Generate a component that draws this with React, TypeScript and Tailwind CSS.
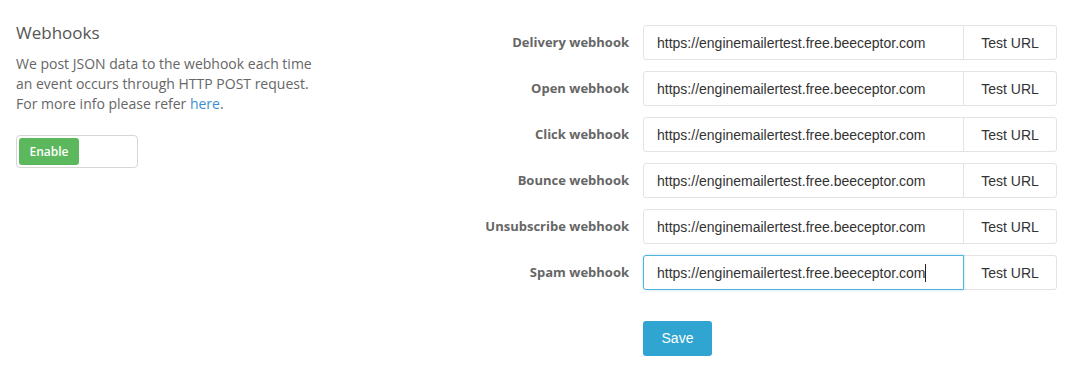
const hooks = ['Delivery', 'Open', 'Click', 'Bounce', 'Unsubscribe', 'Spam']
const url = 'https://enginemailertest.free.beeceptor.com'

function Row({ name, focused }: { name: string; focused?: boolean }) {
  return (
    <div className="flex items-center h-[35px]">
      <label className="w-[159px] text-right text-[13px] font-bold text-[#666] font-['Open_Sans',sans-serif]">
        {name} webhook
      </label>
      <div className="ml-[14px] flex h-[35px]">
        <div
          className={
            focused
              ? 'w-[321px] h-full flex items-center pl-[13px] pt-px border border-[#4fb3dd] rounded-l-[3px] shadow-[0_0_3px_rgba(79,179,221,0.4)] relative z-10'
              : 'w-[321px] h-full flex items-center pl-[13px] pt-px border border-[#e3e3e3] rounded-l-[3px]'
          }
        >
          <span className="text-[14px] text-[#333] font-['Liberation_Sans',Arial,sans-serif]">{url}</span>
          {focused && <span className="w-px h-[18px] bg-[#222]" />}
        </div>
        <button className="w-[94px] h-full -ml-px pt-px border border-[#e3e3e3] rounded-r-[3px] bg-white text-[14px] text-[#333] font-['Liberation_Sans',Arial,sans-serif]">
          Test URL
        </button>
      </div>
    </div>
  )
}

export default function App() {
  return (
    <div className="w-[1071px] h-[375px] bg-white flex">
      <div className="w-[470px] pl-4 pt-[22px] font-['Open_Sans',sans-serif]">
        <h2 className="text-[17px] leading-[22px] text-[#555]">Webhooks</h2>
        <p className="mt-[10px] text-[14px] leading-[20px] text-[#666] w-[300px]">
          We post JSON data to the webhook each time an event occurs through HTTP POST request. For more info
          please refer <a className="text-[#3a8fd0]">here</a>.
        </p>
        <div className="mt-[21px] w-[122px] h-[33px] border border-[#d6d6d6] rounded-[4px] p-[2px]">
          <div className="w-[60px] h-full bg-[#5cb85c] rounded-[3px] flex items-center justify-center text-white text-[12px] font-semibold">
            Enable
          </div>
        </div>
      </div>
      <div className="flex-1 pt-[25px]">
        <div className="flex flex-col gap-[11px]">
          {hooks.map(h => (
            <Row key={h} name={h} focused={h === 'Spam'} />
          ))}
        </div>
        <button className="mt-[31px] ml-[173px] w-[69px] h-[35px] bg-[#30a5d2] rounded-[3px] text-white text-[14px] font-['Liberation_Sans',Arial,sans-serif]">
          Save
        </button>
      </div>
    </div>
  )
}
